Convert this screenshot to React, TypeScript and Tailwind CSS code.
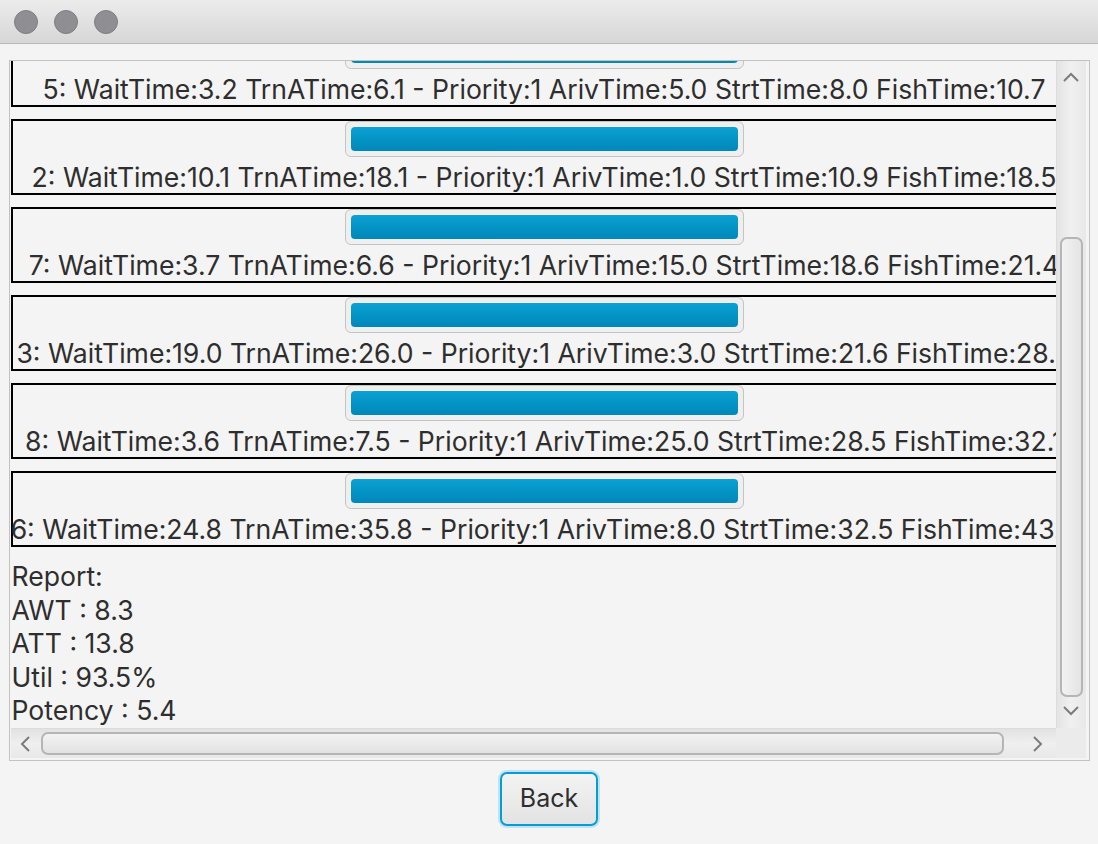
import React from "react";

const rows = [
  "5: WaitTime:3.2 TrnATime:6.1 - Priority:1 ArivTime:5.0 StrtTime:8.0 FishTime:10.7",
  "2: WaitTime:10.1 TrnATime:18.1 - Priority:1 ArivTime:1.0 StrtTime:10.9 FishTime:18.5",
  "7: WaitTime:3.7 TrnATime:6.6 - Priority:1 ArivTime:15.0 StrtTime:18.6 FishTime:21.4",
  "3: WaitTime:19.0 TrnATime:26.0 - Priority:1 ArivTime:3.0 StrtTime:21.6 FishTime:28.6",
  "8: WaitTime:3.6 TrnATime:7.5 - Priority:1 ArivTime:25.0 StrtTime:28.5 FishTime:32.1",
  "6: WaitTime:24.8 TrnATime:35.8 - Priority:1 ArivTime:8.0 StrtTime:32.5 FishTime:43.3",
];

const report = ["Report:", "AWT : 8.3", "ATT : 13.8", "Util : 93.5%", "Potency : 5.4"];

const font = { fontFamily: "Inter, 'Liberation Sans', sans-serif" };

function Chevron({ dir }: { dir: "up" | "down" | "left" | "right" }) {
  const pts: Record<string, string> = {
    up: "2,10 9,3 16,10",
    down: "2,3 9,10 16,3",
    left: "10,2 3,9 10,16",
    right: "3,2 10,9 3,16",
  };
  const vertical = dir === "up" || dir === "down";
  return (
    <svg width={vertical ? 18 : 13} height={vertical ? 13 : 18} viewBox={vertical ? "0 0 18 13" : "0 0 13 18"}>
      <polyline points={pts[dir]} fill="none" stroke="#7c7c7c" strokeWidth="2" />
    </svg>
  );
}

function ProcessCard({ text, first }: { text: string; first?: boolean }) {
  return (
    <div
      className={`w-[1067px] h-[76px] shrink-0 border-2 border-black flex flex-col items-center ${
        first ? "mt-[-30px]" : "mt-[12px]"
      }`}
    >
      <div className="w-[399px] h-[36px] rounded-[6px] border border-[#c4c4c4] bg-[#efefef] p-[5px]">
        <div className="w-full h-full rounded-[4px] bg-gradient-to-b from-[#0aa1d2] to-[#0088b9]" />
      </div>
      <div className="h-[36px] leading-[40px] whitespace-nowrap text-[26.6px] text-[#2e2e2e]">{text}</div>
    </div>
  );
}

export default function App() {
  return (
    <div className="w-[1098px] h-[844px] bg-[#f4f4f4] flex flex-col overflow-hidden" style={font}>
      {/* title bar */}
      <div className="h-[44px] shrink-0 bg-gradient-to-b from-[#ececec] to-[#d6d6d6] border-b border-[#b9b9b9] flex items-center gap-[16px] pl-[14px]">
        <div className="w-[24px] h-[24px] rounded-full bg-[#8f8e93] border border-[#7f7e83]" />
        <div className="w-[24px] h-[24px] rounded-full bg-[#8f8e93] border border-[#7f7e83]" />
        <div className="w-[24px] h-[24px] rounded-full bg-[#8f8e93] border border-[#7f7e83]" />
      </div>

      <div className="pt-[16px] px-[8px] flex flex-col items-center">
        {/* scroll pane */}
        <div className="w-[1081px] h-[701px] border border-[#c2c2c2] px-[1px] pb-[1px] grid grid-cols-[1045px_30px] grid-rows-[667px_30px]">
          <div className="overflow-hidden flex flex-col">
            {rows.map((r, i) => (
              <ProcessCard key={i} text={r} first={i === 0} />
            ))}
            <div className="mt-[13px] pl-[1px] text-[26.6px] leading-[33.6px] text-[#2e2e2e]">
              {report.map((l) => (
                <div key={l}>{l}</div>
              ))}
            </div>
          </div>

          {/* vertical scrollbar */}
          <div className="bg-gradient-to-r from-[#e4e4e4] via-[#f0f0f0] to-[#e8e8e8] border-l border-[#dcdcdc] flex flex-col items-center">
            <div className="h-[30px] flex items-center justify-center pt-[4px]">
              <Chevron dir="up" />
            </div>
            <div className="flex-1 w-full px-[3px] pt-[147px] pb-[2px] flex flex-col">
              <div className="h-[460px] rounded-[7px] border-2 border-[#b5b5b5] bg-gradient-to-r from-[#f2f2f2] to-[#e4e4e4]" />
            </div>
            <div className="h-[30px] flex items-center justify-center pb-[6px]">
              <Chevron dir="down" />
            </div>
          </div>

          {/* horizontal scrollbar */}
          <div className="bg-gradient-to-b from-[#e2e2e2] via-[#efefef] to-[#e8e8e8] border-t border-[#dcdcdc] flex items-center">
            <div className="w-[30px] flex items-center justify-center">
              <Chevron dir="left" />
            </div>
            <div className="w-[963px] h-[23px] rounded-[7px] border-2 border-[#b5b5b5] bg-gradient-to-b from-[#f3f3f3] to-[#e2e2e2]" />
            <div className="flex-1 flex items-center justify-center pl-[16px]">
              <Chevron dir="right" />
            </div>
          </div>
          <div className="bg-[#ebebeb]" />
        </div>

        {/* back button */}
        <button className="mt-[11px] w-[98px] h-[54px] rounded-[7px] border-2 border-[#039ed3] ring-2 ring-[#bfe3f1] bg-gradient-to-b from-[#f3f3f3] to-[#e3e3e3] text-[25px] text-[#2e2e2e] flex items-center justify-center">
          Back
        </button>
      </div>
    </div>
  );
}
